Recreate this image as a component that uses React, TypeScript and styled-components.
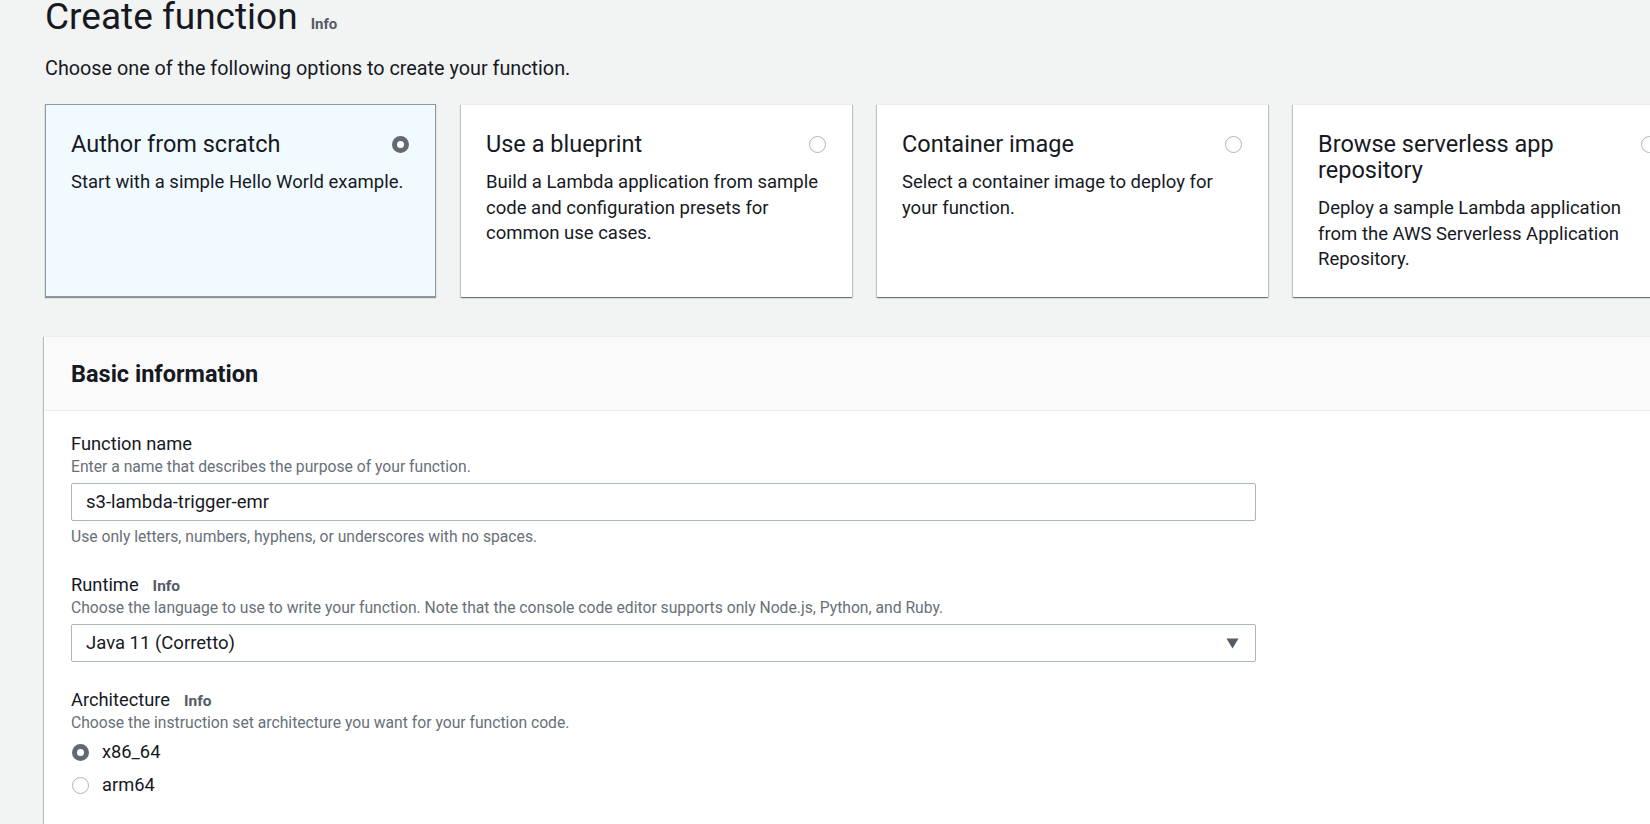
import React from "react";
import styled, { createGlobalStyle, css } from "styled-components";

const GlobalStyle = createGlobalStyle`
  html, body {
    margin: 0;
    padding: 0;
    background: #f2f3f3;
    overflow: hidden;
  }
  body {
    font-family: Roboto, "Open Sans", Arial, sans-serif;
    color: #16191f;
  }
  * { box-sizing: border-box; }
`;

const Page = styled.main`
  width: 1700px;
  padding: 0 0 0 44px;
`;

const TitleRow = styled.h1`
  margin: 0;
  display: flex;
  align-items: baseline;
  gap: 13px;
  font-size: 37px;
  line-height: 34px;
  font-weight: 400;
  padding-left: 1px;
`;

const InfoLink = styled.a<{ $size?: number }>`
  font-size: ${(p) => p.$size ?? 15}px;
  font-weight: 700;
  color: #545b64;
  text-decoration: none;
  line-height: 1;
`;

const Subtitle = styled.p`
  margin: 22px 0 0 1px;
  font-size: 19.8px;
  line-height: 26px;
`;

const Tiles = styled.div`
  margin-top: 22px;
  display: grid;
  grid-template-columns: repeat(4, 391px);
  gap: 25px;
  padding-left: 1px;
`;

const Tile = styled.div<{ $selected?: boolean }>`
  height: 193px;
  padding: 26px 26px 20px 25px;
  background: #fff;
  border-top: 1px solid #eaeded;
  box-shadow: 0 1px 1px 0 rgba(0, 28, 36, 0.35), 1px 1px 1px 0 rgba(0, 28, 36, 0.18),
    -1px 1px 1px 0 rgba(0, 28, 36, 0.18);
  ${(p) =>
    p.$selected &&
    css`
      background: #f1faff;
      border: 1px solid #8d99a6;
      box-shadow: 0 1px 1px 0 rgba(0, 28, 36, 0.45);
    `}
`;

const TileHead = styled.div`
  display: flex;
  justify-content: space-between;
  align-items: flex-start;
  gap: 20px;
`;

const TileTitle = styled.div`
  font-size: 23.5px;
  line-height: 26px;
  max-width: 290px;
`;

const TileDesc = styled.div`
  margin-top: 13px;
  font-size: 18.5px;
  line-height: 25.6px;
`;

const Radio = styled.span<{ $checked?: boolean }>`
  flex: none;
  display: inline-block;
  width: 17px;
  height: 17px;
  border-radius: 50%;
  background: #fff;
  border: ${(p) => (p.$checked ? "5px solid #626973" : "1px solid #aab7b8")};
`;

const TileRadio = styled(Radio)`
  margin-top: 4.5px;
`;

const Panel = styled.section`
  margin-top: 39px;
  width: 1640px;
  background: #fff;
  box-shadow: 0 1px 1px 0 rgba(0, 28, 36, 0.3), 1px 1px 1px 0 rgba(0, 28, 36, 0.15),
    -1px 1px 1px 0 rgba(0, 28, 36, 0.2);
  border-top: 1px solid #eaeded;
`;

const PanelHeader = styled.header`
  height: 74px;
  background: #fafafa;
  border-bottom: 1px solid #eaeded;
  display: flex;
  align-items: center;
  padding-left: 27px;
`;

const PanelTitle = styled.h2`
  margin: 0;
  font-size: 23.5px;
  font-weight: 700;
`;

const PanelBody = styled.div`
  padding: 21px 0 40px 27px;
  display: flex;
  flex-direction: column;
  gap: 26px;
`;

const Field = styled.div`
  width: 1185px;
  display: flex;
  flex-direction: column;
`;

const LabelRow = styled.label`
  display: flex;
  align-items: baseline;
  gap: 14px;
  font-size: 18.3px;
  line-height: 24px;
`;

const Hint = styled.div<{ $gapTop?: number }>`
  font-size: 15.7px;
  line-height: 20px;
  color: #687078;
  margin-top: ${(p) => p.$gapTop ?? 1}px;
`;

const Control = styled.div`
  margin-top: 6px;
  height: 38px;
  border: 1px solid #aab7b8;
  border-radius: 2px;
  background: #fff;
  display: flex;
  align-items: center;
  justify-content: space-between;
  padding: 0 16px 0 14px;
  font-size: 18.5px;
`;

const Caret = styled.svg`
  width: 13px;
  height: 11px;
  margin-top: 1px;
`;

const RadioList = styled.div`
  margin-top: 6px;
  display: flex;
  flex-direction: column;
  gap: 7px;
`;

const RadioRow = styled.label`
  display: flex;
  align-items: center;
  gap: 13px;
  font-size: 18.3px;
  line-height: 26px;
  padding-left: 1px;
`;

const tiles = [
  {
    title: "Author from scratch",
    desc: "Start with a simple Hello World example.",
    selected: true,
  },
  {
    title: "Use a blueprint",
    desc: "Build a Lambda application from sample code and configuration presets for common use cases.",
  },
  {
    title: "Container image",
    desc: "Select a container image to deploy for your function.",
  },
  {
    title: "Browse serverless app repository",
    desc: "Deploy a sample Lambda application from the AWS Serverless Application Repository.",
  },
];

export default function App() {
  return (
    <>
      <GlobalStyle />
      <Page>
        <TitleRow>
          Create function <InfoLink>Info</InfoLink>
        </TitleRow>
        <Subtitle>Choose one of the following options to create your function.</Subtitle>
        <Tiles>
          {tiles.map((t) => (
            <Tile key={t.title} $selected={t.selected}>
              <TileHead>
                <TileTitle>{t.title}</TileTitle>
                <TileRadio $checked={t.selected} />
              </TileHead>
              <TileDesc>{t.desc}</TileDesc>
            </Tile>
          ))}
        </Tiles>
        <Panel>
          <PanelHeader>
            <PanelTitle>Basic information</PanelTitle>
          </PanelHeader>
          <PanelBody>
            <Field>
              <LabelRow>Function name</LabelRow>
              <Hint>Enter a name that describes the purpose of your function.</Hint>
              <Control>s3-lambda-trigger-emr</Control>
              <Hint $gapTop={6}>Use only letters, numbers, hyphens, or underscores with no spaces.</Hint>
            </Field>
            <Field>
              <LabelRow>
                Runtime <InfoLink $size={15.5}>Info</InfoLink>
              </LabelRow>
              <Hint>
                Choose the language to use to write your function. Note that the console code editor
                supports only Node.js, Python, and Ruby.
              </Hint>
              <Control>
                Java 11 (Corretto)
                <Caret viewBox="0 0 13 11">
                  <path d="M0.5 0.5 H12.5 L6.5 10.5 Z" fill="#545b64" />
                </Caret>
              </Control>
            </Field>
            <Field>
              <LabelRow>
                Architecture <InfoLink $size={15.5}>Info</InfoLink>
              </LabelRow>
              <Hint>Choose the instruction set architecture you want for your function code.</Hint>
              <RadioList>
                <RadioRow>
                  <Radio $checked />
                  x86_64
                </RadioRow>
                <RadioRow>
                  <Radio />
                  arm64
                </RadioRow>
              </RadioList>
            </Field>
          </PanelBody>
        </Panel>
      </Page>
    </>
  );
}
